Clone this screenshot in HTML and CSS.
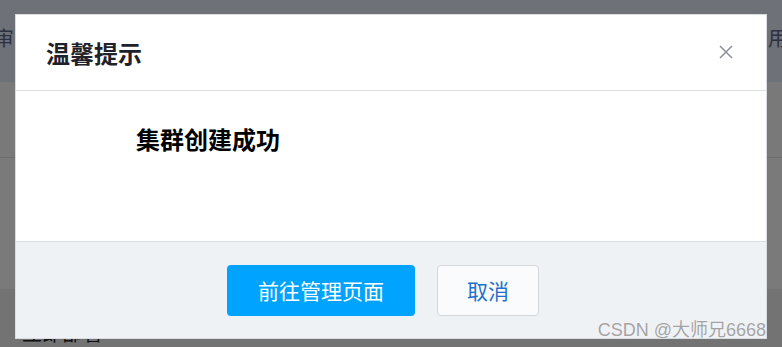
FILE: index.html
```html
<!DOCTYPE html>
<html lang="zh-CN">
<head>
    <meta charset="UTF-8">
    <meta name="viewport" content="width=device-width, initial-scale=1.0">
    <title>温馨提示</title>
    <link rel="stylesheet" href="styles.css">
</head>
<body>
    <div class="page">
        <div class="topbar">
            <span class="topbar-left">审</span>
            <span class="topbar-right">用户</span>
        </div>
        <div class="panel"></div>
        <div class="panel panel-low"></div>
        <div class="footer-strip">
            <span class="deploy">立即部署</span>
        </div>
    </div>

    <!-- Mask + dialog -->
    <div class="mask"></div>
    <div class="dialog">
        <div class="dialog-header">
            <span class="dialog-title">温馨提示</span>
            <svg class="dialog-close" width="16" height="16" viewBox="0 0 16 16">
                <path d="M2 2 L14 14 M14 2 L2 14" stroke="#909399" stroke-width="1.6" fill="none"/>
            </svg>
        </div>
        <div class="dialog-body">集群创建成功</div>
        <div class="dialog-footer">
            <button class="btn btn-primary">前往管理页面</button>
            <button class="btn btn-default">取消</button>
        </div>
    </div>

    <div class="watermark">CSDN @大师兄6668</div>
</body>
</html>
```

FILE: styles.css
```css
body {
    margin: 0;
    font-family: "Noto Sans CJK SC", "Noto Sans", sans-serif;
    background-color: #f4f4f4;
    width: 782px;
    height: 347px;
    overflow: hidden;
    position: relative;
}

.page {
    display: flex;
    flex-direction: column;
    height: 347px;
}

.topbar {
    height: 88px;
    background-color: #dde2ee;
    display: flex;
    justify-content: space-between;
    align-items: center;
    font-size: 20px;
    color: #5a6280;
}

.topbar-left {
    margin-left: -6px;
    margin-top: -6px;
}

.topbar-right {
    margin-right: -26px;
    margin-top: -6px;
}

.panel {
    height: 81px;
    background-color: #f2f2f2;
    border-bottom: 1px solid #dcdcdc;
}

.panel-low {
    height: 141px;
    border-bottom: none;
    background-color: #f4f4f4;
}

.footer-strip {
    flex: 1;
    background-color: #e6e6e6;
    padding: 29px 0 0 22px;
}

.deploy {
    font-size: 20px;
    color: #222;
}

.mask {
    position: absolute;
    left: 0;
    top: 0;
    width: 100%;
    height: 100%;
    background-color: rgba(0, 0, 0, 0.5);
}

.dialog {
    position: absolute;
    left: 15px;
    top: 14px;
    width: 750px;
    background-color: #fff;
    border: 1px solid #d9dce1;
    display: flex;
    flex-direction: column;
}

.dialog-header {
    height: 75px;
    padding: 0 32px 0 30px;
    display: flex;
    align-items: center;
    justify-content: space-between;
    border-bottom: 1px solid #dcdfe6;
}

.dialog-title {
    font-size: 24px;
    font-weight: bold;
    color: #1f2329;
}

.dialog-close {
    margin-top: -2px;
}

.dialog-body {
    height: 151px;
    box-sizing: border-box;
    padding: 31px 0 0 120px;
    font-size: 24px;
    line-height: 34px;
    font-weight: bold;
    color: #000;
    border-bottom: 1px solid #d8dce3;
}

.dialog-footer {
    height: 96px;
    background-color: #eff2f5;
    display: flex;
    align-items: center;
    justify-content: center;
    gap: 22px;
    padding-right: 16px;
}

.btn {
    height: 51px;
    border-radius: 4px;
    font-family: "Noto Sans CJK SC", sans-serif;
    font-size: 21px;
    cursor: pointer;
}

.btn-primary {
    width: 188px;
    border: none;
    background-color: #00a4ff;
    color: #fff;
}

.btn-default {
    width: 102px;
    border: 1px solid #d3d6db;
    background-color: #fafbfc;
    color: #1f6fcc;
}

.watermark {
    position: absolute;
    right: 16px;
    bottom: 6px;
    font-family: "Liberation Sans", "Noto Sans CJK SC", sans-serif;
    font-size: 18px;
    color: #a3a3a3;
    text-shadow: 0 0 1px #fff;
}
```
